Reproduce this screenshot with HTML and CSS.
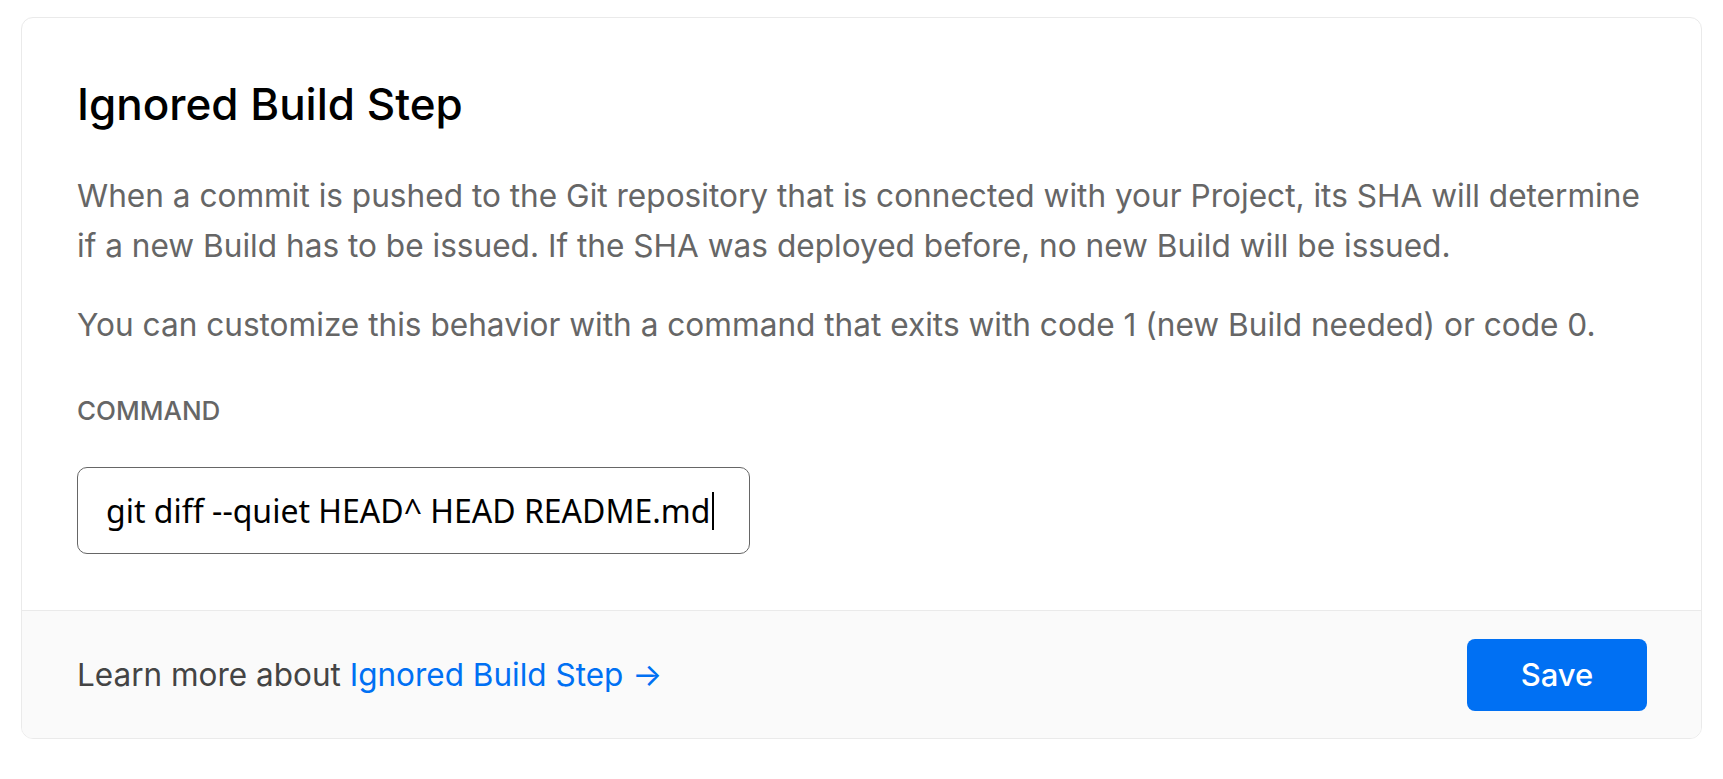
FILE: index.html
```html
<!DOCTYPE html>
<html lang="en">
<head>
<meta charset="utf-8">
<title>Ignored Build Step</title>
<link rel="stylesheet" href="styles.css">
</head>
<body>
<section class="card">
  <div class="card-body">
    <h2 class="title">Ignored Build Step</h2>
    <p class="desc">When a commit is pushed to the Git repository that is connected with your Project, its SHA will determine if a new Build has to be issued. If the SHA was deployed before, no new Build will be issued.</p>
    <p class="desc desc-second">You can customize this behavior with a command that exits with code 1 (new Build needed) or code 0.</p>
    <div class="label">COMMAND</div>
    <div class="input"><span class="input-text">git diff --quiet HEAD^ HEAD README.md</span><span class="caret"></span></div>
  </div>
  <div class="card-footer">
    <p class="footer-text">Learn more about <a class="link" href="#">Ignored Build Step →</a></p>
    <button class="btn" type="button">Save</button>
  </div>
</section>
</body>
</html>
```

FILE: styles.css
```css
html, body {
  margin: 0;
  padding: 0;
  background: #ffffff;
}

body {
  font-family: Inter, "Noto Sans", "Liberation Sans", sans-serif;
  padding: 17px 21px 0 21px;
}

.card {
  border: 1px solid #eaeaea;
  border-radius: 12px;
  background: #ffffff;
  overflow: hidden;
}

.card-body {
  padding: 60px 52px 56px 55px;
}

.title {
  margin: 0;
  font-size: 44px;
  line-height: 52px;
  font-weight: 500;
  color: #000000;
}

.desc {
  margin: 41px 0 0 0;
  font-size: 31.6px;
  line-height: 50px;
  color: #666666;
  font-weight: 400;
}

.desc-second {
  margin-top: 29px;
}

.label {
  margin-top: 45px;
  font-size: 26px;
  line-height: 32px;
  font-weight: 500;
  color: #666666;
}

.input {
  margin-top: 40px;
  width: 673px;
  height: 87px;
  box-sizing: border-box;
  border: 1.5px solid #666666;
  border-radius: 10px;
  padding: 0 28px;
  display: flex;
  align-items: center;
  white-space: nowrap;
  font-family: "Noto Sans", "Open Sans", sans-serif;
  font-size: 32px;
  color: #000000;
}

.caret {
  display: inline-block;
  flex: none;
  width: 2px;
  height: 38px;
  background: #000000;
  margin-left: 2px;
}

.card-footer {
  border-top: 1px solid #eaeaea;
  background: #fafafa;
  height: 127px;
  padding: 0 54px 0 55px;
  display: flex;
  align-items: center;
  justify-content: space-between;
}

.footer-text {
  margin: 0;
  font-size: 31.5px;
  color: #444444;
}

.link {
  color: #0070f3;
  text-decoration: none;
}

.btn {
  width: 180px;
  height: 72px;
  border: none;
  border-radius: 8px;
  background: #0070f3;
  color: #ffffff;
  font-family: Inter, "Noto Sans", sans-serif;
  font-size: 31px;
  font-weight: 500;
  cursor: pointer;
}
```
